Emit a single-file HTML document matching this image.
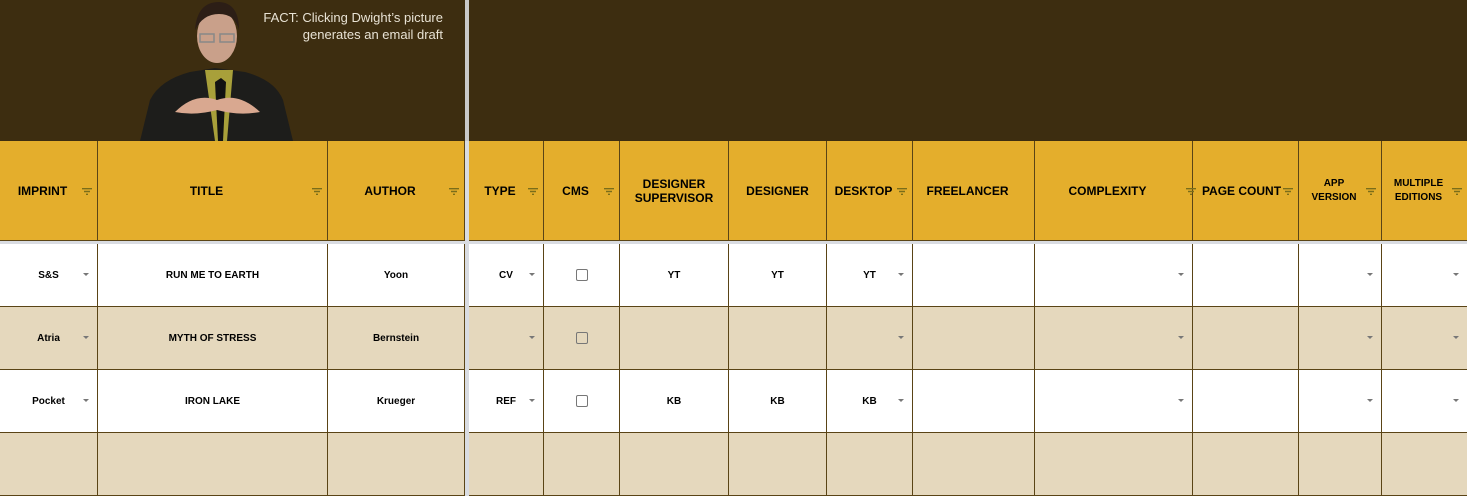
<!DOCTYPE html>
<html><head><meta charset="utf-8"><style>
*{box-sizing:border-box;margin:0;padding:0}
body{width:1467px;height:450px;overflow:hidden;background:#fff;font-family:"Liberation Sans",sans-serif;position:relative}
.top{position:absolute;left:0;top:0;width:1467px;height:141px;background:#3d2d10}
.topgap{position:absolute;left:465px;top:0;width:4px;height:141px;background:#c9c9c9}
.row{position:absolute;left:0;display:flex;width:1467px}
.c{position:relative;border-right:1px solid #5a4416;border-bottom:1px solid #5a4416;display:flex;align-items:center;justify-content:center;text-align:center;font-weight:bold;color:#000}
.g{background:#d9dce2;border-right:none;border-bottom:none}
.h{height:100px;background:#e4ae2c;font-size:12px;padding-right:12px}
.h.n{padding-right:0}
.h.s{font-size:10px;line-height:14px}
.d{height:63px;font-size:10px}
.w .c:not(.g){background:#fff}
.t .c:not(.g){background:#e5d8bd}
.f{position:absolute;right:5px;top:47px;width:10px;height:7px}
.dd{position:absolute;right:8px;top:29px;width:0;height:0;border-left:3px solid transparent;border-right:3px solid transparent;border-top:3px solid #777}
.cb{width:12px;height:12px;border:1.5px solid #777;border-radius:2px}
</style></head><body>
<div class="top"></div>
<div class="topgap"></div>
<svg style="position:absolute;left:135px;top:0" width="160" height="141" viewBox="0 0 160 141">
<path d="M5 141 L15 100 Q25 80 55 72 L80 68 L110 72 Q140 80 148 100 L158 141Z" fill="#1d1d1b"/>
<path d="M70 70 L80 141 L92 141 L98 70Z" fill="#a8a03a"/>
<path d="M80 82 L86 78 L91 82 L88 141 L83 141Z" fill="#121212"/>
<ellipse cx="82" cy="36" rx="20" ry="27" fill="#c9a08a"/>
<path d="M60 30 Q62 2 84 2 Q104 3 104 30 Q100 14 84 14 Q68 14 60 30Z" fill="#2c1e16"/>
<rect x="65" y="34" width="14" height="8" fill="none" stroke="#888" stroke-width="1.5"/>
<rect x="85" y="34" width="14" height="8" fill="none" stroke="#888" stroke-width="1.5"/>
<path d="M40 112 Q60 92 82 100 Q104 92 125 112 Q104 116 82 110 Q60 116 40 112Z" fill="#d9a890"/>
</svg>
<div style="position:absolute;left:250px;top:9px;width:193px;text-align:right;color:#e8e2d4;font-size:13px;line-height:17px">FACT: Clicking Dwight’s picture<br>generates an email draft</div>

<div class="row" style="top:141px">
<div class="c h" style="width:98px">IMPRINT<svg class="f" viewBox="0 0 10 7"><path d="M0 0.7H10M2 3.5H8M4 6.3H6" stroke="#7a6d1a" stroke-width="1.4"/></svg></div>
<div class="c h" style="width:230px">TITLE<svg class="f" viewBox="0 0 10 7"><path d="M0 0.7H10M2 3.5H8M4 6.3H6" stroke="#7a6d1a" stroke-width="1.4"/></svg></div>
<div class="c h" style="width:137px">AUTHOR<svg class="f" viewBox="0 0 10 7"><path d="M0 0.7H10M2 3.5H8M4 6.3H6" stroke="#7a6d1a" stroke-width="1.4"/></svg></div>
<div class="c g" style="width:4px;height:103px"></div>
<div class="c h" style="width:75px">TYPE<svg class="f" viewBox="0 0 10 7"><path d="M0 0.7H10M2 3.5H8M4 6.3H6" stroke="#7a6d1a" stroke-width="1.4"/></svg></div>
<div class="c h" style="width:76px">CMS<svg class="f" viewBox="0 0 10 7"><path d="M0 0.7H10M2 3.5H8M4 6.3H6" stroke="#7a6d1a" stroke-width="1.4"/></svg></div>
<div class="c h n" style="width:109px;line-height:14px">DESIGNER<br>SUPERVISOR</div>
<div class="c h n" style="width:98px">DESIGNER</div>
<div class="c h" style="width:86px">DESKTOP<svg class="f" viewBox="0 0 10 7"><path d="M0 0.7H10M2 3.5H8M4 6.3H6" stroke="#7a6d1a" stroke-width="1.4"/></svg></div>
<div class="c h" style="width:122px">FREELANCER</div>
<div class="c h" style="width:158px">COMPLEXITY</div>
<div class="c h" style="width:106px;padding-right:8px">PAGE COUNT<svg class="f" viewBox="0 0 10 7" style="left:-7px;right:auto"><path d="M0 0.7H10M2 3.5H8M4 6.3H6" stroke="#7a6d1a" stroke-width="1.4"/></svg><svg class="f" viewBox="0 0 10 7"><path d="M0 0.7H10M2 3.5H8M4 6.3H6" stroke="#7a6d1a" stroke-width="1.4"/></svg></div>
<div class="c h s" style="width:83px">APP<br>VERSION<svg class="f" viewBox="0 0 10 7"><path d="M0 0.7H10M2 3.5H8M4 6.3H6" stroke="#7a6d1a" stroke-width="1.4"/></svg></div>
<div class="c h s" style="width:85px;border-right:none">MULTIPLE<br>EDITIONS<svg class="f" viewBox="0 0 10 7"><path d="M0 0.7H10M2 3.5H8M4 6.3H6" stroke="#7a6d1a" stroke-width="1.4"/></svg></div>
</div>
<div style="position:absolute;left:0;top:241px;width:1467px;height:3px;background:#d9dce2"></div>

<div class="row w" style="top:244px">
<div class="c d" style="width:98px">S&amp;S<span class="dd"></span></div>
<div class="c d" style="width:230px">RUN ME TO EARTH</div>
<div class="c d" style="width:137px">Yoon</div>
<div class="c g" style="width:4px;height:63px"></div>
<div class="c d" style="width:75px">CV<span class="dd"></span></div>
<div class="c d" style="width:76px"><span class="cb"></span></div>
<div class="c d" style="width:109px">YT</div>
<div class="c d" style="width:98px">YT</div>
<div class="c d" style="width:86px">YT<span class="dd"></span></div>
<div class="c d" style="width:122px"></div>
<div class="c d" style="width:158px"><span class="dd"></span></div>
<div class="c d" style="width:106px"></div>
<div class="c d" style="width:83px"><span class="dd"></span></div>
<div class="c d" style="width:85px;border-right:none"><span class="dd"></span></div>
</div>
<div class="row t" style="top:307px">
<div class="c d" style="width:98px">Atria<span class="dd"></span></div>
<div class="c d" style="width:230px">MYTH OF STRESS</div>
<div class="c d" style="width:137px">Bernstein</div>
<div class="c g" style="width:4px;height:63px"></div>
<div class="c d" style="width:75px"><span class="dd"></span></div>
<div class="c d" style="width:76px"><span class="cb"></span></div>
<div class="c d" style="width:109px"></div>
<div class="c d" style="width:98px"></div>
<div class="c d" style="width:86px"><span class="dd"></span></div>
<div class="c d" style="width:122px"></div>
<div class="c d" style="width:158px"><span class="dd"></span></div>
<div class="c d" style="width:106px"></div>
<div class="c d" style="width:83px"><span class="dd"></span></div>
<div class="c d" style="width:85px;border-right:none"><span class="dd"></span></div>
</div>
<div class="row w" style="top:370px">
<div class="c d" style="width:98px">Pocket<span class="dd"></span></div>
<div class="c d" style="width:230px">IRON LAKE</div>
<div class="c d" style="width:137px">Krueger</div>
<div class="c g" style="width:4px;height:63px"></div>
<div class="c d" style="width:75px">REF<span class="dd"></span></div>
<div class="c d" style="width:76px"><span class="cb"></span></div>
<div class="c d" style="width:109px">KB</div>
<div class="c d" style="width:98px">KB</div>
<div class="c d" style="width:86px">KB<span class="dd"></span></div>
<div class="c d" style="width:122px"></div>
<div class="c d" style="width:158px"><span class="dd"></span></div>
<div class="c d" style="width:106px"></div>
<div class="c d" style="width:83px"><span class="dd"></span></div>
<div class="c d" style="width:85px;border-right:none"><span class="dd"></span></div>
</div>
<div class="row t" style="top:433px">
<div class="c d" style="width:98px"></div>
<div class="c d" style="width:230px"></div>
<div class="c d" style="width:137px"></div>
<div class="c g" style="width:4px;height:63px"></div>
<div class="c d" style="width:75px"></div>
<div class="c d" style="width:76px"></div>
<div class="c d" style="width:109px"></div>
<div class="c d" style="width:98px"></div>
<div class="c d" style="width:86px"></div>
<div class="c d" style="width:122px"></div>
<div class="c d" style="width:158px"></div>
<div class="c d" style="width:106px"></div>
<div class="c d" style="width:83px"></div>
<div class="c d" style="width:85px;border-right:none"></div>
</div>
</body></html>
